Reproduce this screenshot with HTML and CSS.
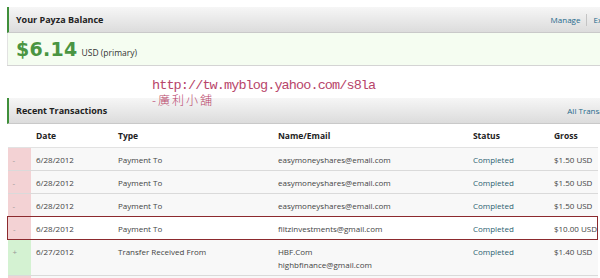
FILE: index.html
```html
<!DOCTYPE html>
<html lang="zh-TW">
<head>
    <meta charset="UTF-8">
    <title>Payza Balance</title>
    <link rel="stylesheet" href="styles.css">
</head>
<body>
    <div class="page">
        <!-- Saldo -->
        <div class="panel">
            <div class="panel-head">
                <span class="panel-title">Your Payza Balance</span>
                <span class="panel-links"><a href="#">Manage</a><span class="sep"></span><a href="#">Exchange</a></span>
            </div>
            <div class="balance">
                <span class="amount">$6.14</span>
                <span class="currency">USD (primary)</span>
            </div>
        </div>

        <div class="watermark">
            <div class="wm-url">http://tw.myblog.yahoo.com/s8la</div>
            <div class="wm-name">-廣利小舖</div>
        </div>

        <!-- Transações -->
        <div class="panel recent">
            <div class="panel-head">
                <span class="panel-title">Recent Transactions</span>
                <span class="panel-links all"><a href="#">All Transactions</a></span>
            </div>
            <table class="tx">
                <thead>
                    <tr>
                        <th class="ind"></th>
                        <th class="c-date">Date</th>
                        <th class="c-type">Type</th>
                        <th class="c-name">Name/Email</th>
                        <th class="c-status">Status</th>
                        <th class="c-gross">Gross</th>
                    </tr>
                </thead>
                <tbody>
                    <tr>
                        <td class="ind minus">-</td>
                        <td>6/28/2012</td>
                        <td>Payment To</td>
                        <td>easymoneyshares@email.com</td>
                        <td class="status">Completed</td>
                        <td>$1.50 USD</td>
                    </tr>
                    <tr>
                        <td class="ind minus">-</td>
                        <td>6/28/2012</td>
                        <td>Payment To</td>
                        <td>easymoneyshares@email.com</td>
                        <td class="status">Completed</td>
                        <td>$1.50 USD</td>
                    </tr>
                    <tr class="before-marked">
                        <td class="ind minus">-</td>
                        <td>6/28/2012</td>
                        <td>Payment To</td>
                        <td>easymoneyshares@email.com</td>
                        <td class="status">Completed</td>
                        <td>$1.50 USD</td>
                    </tr>
                    <tr class="marked">
                        <td class="ind minus">-</td>
                        <td>6/28/2012</td>
                        <td>Payment To</td>
                        <td>filtzinvestments@gmail.com</td>
                        <td class="status">Completed</td>
                        <td>$10.00 USD</td>
                    </tr>
                    <tr>
                        <td class="ind plus">+</td>
                        <td>6/27/2012</td>
                        <td>Transfer Received From</td>
                        <td>HBF.Com<br>highbfinance@gmail.com</td>
                        <td class="status">Completed</td>
                        <td>$1.40 USD</td>
                    </tr>
                    <tr>
                        <td class="ind minus">-</td>
                        <td>6/27/2012</td>
                        <td>Payment To</td>
                        <td>easymoneyshares@email.com</td>
                        <td class="status">Completed</td>
                        <td>$1.50 USD</td>
                    </tr>
                </tbody>
            </table>
        </div>
    </div>
</body>
</html>
```

FILE: styles.css
```css
html, body {
    margin: 0;
    padding: 0;
    background: #fff;
    overflow: hidden;
}

body {
    font-family: 'Open Sans', 'DejaVu Sans', sans-serif;
    font-size: 8px;
    color: #444;
}

a {
    color: #1f6a8c;
    text-decoration: none;
}

.page {
    position: relative;
    width: 640px;
    padding: 7px 0 0 7px;
}

.panel {
    border-bottom: 1px solid #d4d4d4;
}

.panel-head {
    height: 25px;
    display: flex;
    align-items: center;
    justify-content: space-between;
    padding: 0 0 0 7px;
    border-left: 2px solid #3f8f3a;
    border-bottom: 1px solid #c9c9c9;
    background: linear-gradient(#f6f6f6, #dcdcdc);
}

.panel-title {
    font-weight: bold;
    font-size: 9px;
    color: #222;
}

.panel-links {
    display: flex;
    align-items: center;
    gap: 6px;
    margin-right: 18px;
}

.panel-links.all {
    margin-right: 21px;
}

.sep {
    width: 1px;
    height: 12px;
    background: #c4c4c4;
}

.balance {
    height: 32px;
    display: flex;
    align-items: baseline;
    gap: 4px;
    padding: 0 0 0 8px;
    border-left: 1px solid #e2e2e2;
    background: #f5fdf1;
}

.amount {
    font-family: 'DejaVu Sans', sans-serif;
    font-weight: bold;
    font-size: 19px;
    letter-spacing: 0.3px;
    color: #4a9542;
    line-height: 32px;
}

.currency {
    font-size: 8.5px;
    color: #333;
}

.recent {
    margin-top: 32px;
    border-bottom: none;
}

.watermark {
    position: absolute;
    left: 152px;
    top: 79px;
    color: #b8456a;
    z-index: 2;
}

.wm-url {
    font-family: 'Liberation Mono', monospace;
    font-size: 13.5px;
    letter-spacing: -0.9px;
    line-height: 14px;
}

.wm-name {
    font-family: 'Noto Sans CJK TC', sans-serif;
    font-weight: 300;
    font-size: 12px;
    letter-spacing: 2px;
    line-height: 13px;
}

.tx {
    border-collapse: collapse;
    width: 591px;
}

.tx th {
    height: 23px;
    text-align: left;
    font-weight: bold;
    font-size: 8.5px;
    color: #222;
    background: #fff;
    padding: 0 0 0 5px;
    border-bottom: 1px solid #e2e2e2;
}

.tx td {
    padding: 5px 0 4px 5px;
    line-height: 13px;
    background: #f8f8f8;
    border-bottom: 1px solid #dadada;
    vertical-align: top;
    white-space: nowrap;
}

.tx .ind {
    width: 18px;
    padding-left: 5px;
    color: #999;
}

.tx td.minus {
    background: #f3d2d4;
}

.tx td.plus {
    background: #d4f2d2;
}

.c-date { width: 77px; }
.c-type { width: 155px; }
.c-name { width: 190px; }
.c-status { width: 76px; }

.tx td.status {
    color: #2c6270;
}

.tx tr.before-marked td {
    border-bottom-color: #8c2a2e;
}

.tx tr.marked td {
    background: #fff;
    border-bottom-color: #8c2a2e;
}

.tx tr.marked td.ind {
    background: #f3d2d4;
    border-left: 1px solid #8c2a2e;
}

.tx tr.marked td:last-child {
    border-right: 1px solid #8c2a2e;
}
```
